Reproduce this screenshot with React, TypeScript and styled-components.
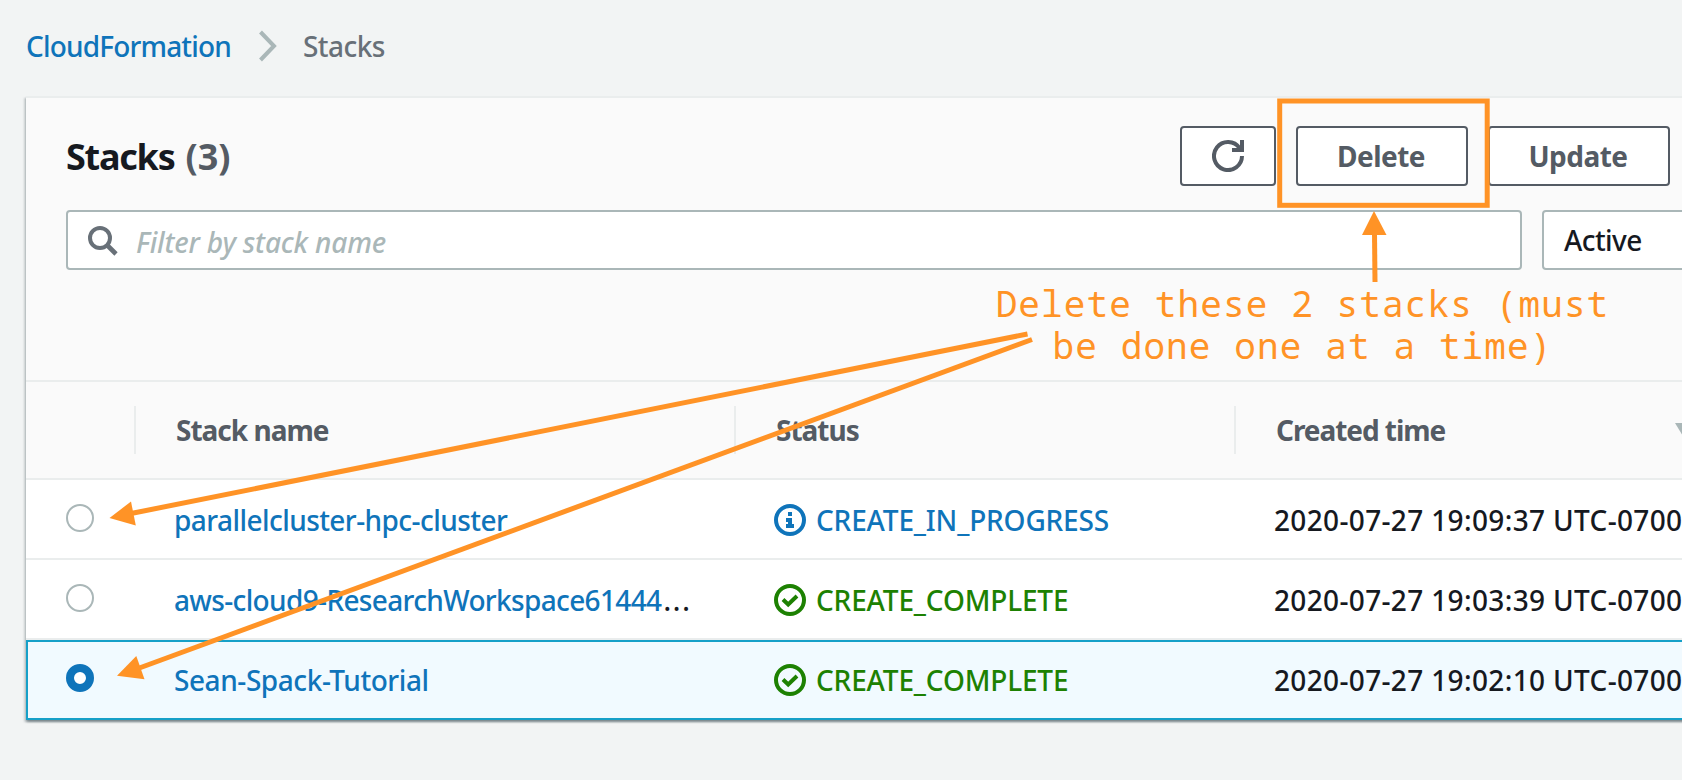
import React from "react";
import styled, { createGlobalStyle, css } from "styled-components";

const color = {
  page: "#f2f4f4",
  panel: "#fafafa",
  rule: "#eaeded",
  field: "#aab7b8",
  ink: "#16191f",
  slate: "#545b64",
  grey: "#687078",
  link: "#0f74ba",
  ok: "#1d8102",
  selected: "#f1faff",
  selectedBorder: "#16a0c8",
  note: "#ff9326",
};

const GlobalStyle = createGlobalStyle`
  * { box-sizing: border-box; }
  body {
    margin: 0;
    background: ${color.page};
    color: ${color.ink};
    font-family: "Noto Sans", "Open Sans", sans-serif;
    font-size: 28px;
    font-weight: 500;
    line-height: 40px;
    overflow: hidden;
  }
`;

const Page = styled.main`
  position: relative;
  width: 1682px;
  height: 780px;
  padding-left: 26px;
  overflow: hidden;
`;

/* Fine tracking for each label */
const Label = styled.span<{ $track?: number }>`
  letter-spacing: ${(p) => p.$track ?? 0}px;
  white-space: nowrap;
`;

const Breadcrumbs = styled.nav`
  display: flex;
  align-items: center;
  height: 96px;
  padding-bottom: 5px;
  color: ${color.grey};
`;

const Crumb = styled(Label)<{ $link?: boolean }>`
  width: ${(p) => (p.$link ? "205px" : "auto")};
  color: ${(p) => (p.$link ? color.link : color.grey)};
`;

const Chevron = styled.svg`
  width: 18px;
  height: 32px;
  margin: 1px 26px 0 28px;
`;

const Panel = styled.section`
  width: 1900px;
  border-top: 2px solid ${color.rule};
  background: ${color.panel};
  box-shadow:
    0 2px 2px rgba(0, 28, 36, 0.3),
    2px 2px 2px rgba(0, 28, 36, 0.15),
    -2px 2px 2px rgba(0, 28, 36, 0.15);
`;

const PanelHeader = styled.header`
  height: 282px;
  padding: 28px 0 0 40px;
`;

const TitleRow = styled.div`
  display: flex;
  align-items: center;
  height: 60px;
`;

const Title = styled.h1`
  width: 1114px;
  margin: 2px 0 0;
  font-size: 36px;
  font-weight: 700;
  white-space: nowrap;
`;

const Count = styled.span`
  margin-left: 11px;
  color: ${color.slate};
`;

const Actions = styled.div`
  display: flex;
  gap: 20px;
`;

const Button = styled.button<{ $width: number }>`
  display: flex;
  align-items: center;
  justify-content: center;
  width: ${(p) => p.$width}px;
  height: 60px;
  padding: 0 2px 1px 0;
  border: 2px solid ${color.slate};
  border-radius: 4px;
  background: #fff;
  color: ${color.slate};
  font: inherit;
  font-weight: 700;
`;

const RefreshGlyph = styled.svg`
  width: 32px;
  height: 32px;
  margin: 1px 0 0 2px;
`;

const Filters = styled.div`
  display: flex;
  gap: 20px;
  margin-top: 24px;
`;

const field = css`
  display: flex;
  align-items: center;
  height: 60px;
  border: 2px solid ${color.field};
  border-radius: 4px;
  background: #fff;
`;

const Search = styled.div`
  ${field}
  width: 1456px;
  padding: 3px 0 0 20px;
  color: ${color.field};
  font-style: italic;
`;

const SearchGlyph = styled.svg`
  width: 30px;
  height: 30px;
  margin: -2px 18px 0 0;
`;

const Select = styled.div`
  ${field}
  width: 300px;
  padding: 0 0 1px 20px;
`;

const columns = css`
  display: grid;
  grid-template-columns: 110px 600px 500px 1fr;
`;

const HeadRow = styled.div`
  ${columns}
  height: 100px;
  border-top: 2px solid ${color.rule};
  border-bottom: 2px solid ${color.rule};
  align-items: center;
`;

const HeadCell = styled.div<{ $last?: boolean }>`
  display: flex;
  align-items: center;
  height: 48px;
  padding: 0 0 1px 40px;
  border-right: ${(p) => (p.$last ? "0" : `2px solid ${color.rule}`)};
  color: ${color.slate};
  font-weight: 700;
`;

const SortGlyph = styled.svg`
  width: 16px;
  height: 13px;
  margin: 0 0 0 230px;
`;

const Row = styled.div<{ $selected?: boolean }>`
  ${columns}
  height: 80px;
  align-items: center;
  background: #fff;
  border-bottom: 2px solid ${color.rule};
  ${(p) =>
    p.$selected &&
    css`
      background: ${color.selected};
      border-bottom: 0;
      box-shadow: inset 0 0 0 2px ${color.selectedBorder};
      padding-bottom: 2px;
    `}
`;

const Cell = styled.div<{ $tone?: string }>`
  display: flex;
  align-items: center;
  padding: 2px 0 0 38px;
  color: ${(p) => p.$tone ?? color.ink};
`;

const RadioCell = styled.div`
  padding: 0 0 2px 40px;
  line-height: 0;
`;

const Radio = styled.span<{ $on?: boolean }>`
  display: inline-block;
  width: 28px;
  height: 28px;
  border: ${(p) => (p.$on ? `8px solid ${color.link}` : `2px solid ${color.field}`)};
  border-radius: 50%;
  background: #fff;
`;

const Ellipsis = styled.span`
  margin-left: 2px;
  color: ${color.ink};
  letter-spacing: 1.8px;
`;

const StatusGlyph = styled.svg`
  width: 32px;
  height: 32px;
  margin: 0 10px 0 0;
`;

const Overlay = styled.svg`
  position: absolute;
  inset: 0;
  pointer-events: none;
`;

const Note = styled.p`
  position: absolute;
  left: 994px;
  top: 283px;
  width: 617px;
  margin: 0;
  color: ${color.note};
  font: 400 36px/42px "Noto Sans Mono", "DejaVu Sans Mono", monospace;
  letter-spacing: 1.13px;
  text-align: center;
  white-space: nowrap;
`;

type Stack = { name: string; track: number; cut?: boolean; done: boolean; created: string; selected?: boolean };

const stacks: Stack[] = [
  { name: "parallelcluster-hpc-cluster", track: -0.56, done: false, created: "2020-07-27 19:09:37 UTC-0700" },
  { name: "aws-cloud9-ResearchWorkspace61444", track: -0.65, cut: true, done: true, created: "2020-07-27 19:03:39 UTC-0700" },
  { name: "Sean-Spack-Tutorial", track: -0.43, done: true, created: "2020-07-27 19:02:10 UTC-0700", selected: true },
];

function StatusIcon({ done }: { done: boolean }) {
  return (
    <StatusGlyph viewBox="0 0 32 32" fill="none" stroke="currentColor" strokeWidth="4">
      <circle cx="16" cy="16" r="14" />
      {done ? (
        <path d="M9 15.5l5.2 5L23 12" />
      ) : (
        <path d="M14 8h4v4h-4zM12 14h6v6h2v4h-8v-4h2v-2h-2z" fill="currentColor" stroke="none" />
      )}
    </StatusGlyph>
  );
}

export default function App() {
  return (
    <Page>
      <GlobalStyle />
      <Breadcrumbs>
        <Crumb $link $track={-0.83}>
          CloudFormation
        </Crumb>
        <Chevron viewBox="0 0 18 32" fill="none" stroke={color.field} strokeWidth="4">
          <path d="M1.5 2L15 16L1.5 30" />
        </Chevron>
        <Crumb $track={-0.55}>Stacks</Crumb>
      </Breadcrumbs>

      <Panel>
        <PanelHeader>
          <TitleRow>
            <Title>
              <Label $track={-1.25}>Stacks</Label>
              <Count>(3)</Count>
            </Title>
            <Actions>
              <Button $width={96} aria-label="Refresh">
                <RefreshGlyph viewBox="0 0 32 32" fill="none" stroke="currentColor" strokeWidth="4">
                  <path d="M30 16A14 14 0 1 1 27.6 8.2" />
                  <path d="M30 0V10H20" />
                  <path d="M24 6L29 6V10Z" fill="currentColor" stroke="none" />
                </RefreshGlyph>
              </Button>
              <Button $width={172}>
                <Label $track={-0.5}>Delete</Label>
              </Button>
              <Button $width={182}>
                <Label $track={-0.5}>Update</Label>
              </Button>
            </Actions>
          </TitleRow>
          <Filters>
            <Search>
              <SearchGlyph viewBox="0 0 30 30" fill="none" stroke={color.grey} strokeWidth="4">
                <circle cx="12" cy="12" r="10" />
                <path d="M19 19l9 9" strokeWidth="4.6" />
              </SearchGlyph>
              <Label $track={-0.17}>Filter by stack name</Label>
            </Search>
            <Select>
              <Label $track={-0.6}>Active</Label>
            </Select>
          </Filters>
        </PanelHeader>

        <HeadRow>
          <HeadCell />
          <HeadCell>
            <Label $track={-1}>Stack name</Label>
          </HeadCell>
          <HeadCell>
            <Label $track={-1}>Status</Label>
          </HeadCell>
          <HeadCell $last>
            <Label $track={-1.05}>Created time</Label>
            <SortGlyph viewBox="0 0 16 13">
              <path d="M0 0H16L8 13Z" fill={color.field} />
            </SortGlyph>
          </HeadCell>
        </HeadRow>
        {stacks.map((s) => (
          <Row key={s.name} $selected={s.selected}>
            <RadioCell>
              <Radio $on={s.selected} />
            </RadioCell>
            <Cell $tone={color.link}>
              <Label $track={s.track}>{s.name}</Label>
              {s.cut && <Ellipsis>...</Ellipsis>}
            </Cell>
            <Cell $tone={s.done ? color.ok : color.link}>
              <StatusIcon done={s.done} />
              <Label $track={-0.16}>{s.done ? "CREATE_COMPLETE" : "CREATE_IN_PROGRESS"}</Label>
            </Cell>
            <Cell>
              <Label $track={0.35}>{s.created}</Label>
            </Cell>
          </Row>
        ))}
      </Panel>

      <Overlay width="1682" height="780" viewBox="0 0 1682 780" fill="none" stroke={color.note} strokeWidth="5">
        <rect x="1279.7" y="101" width="207.5" height="104.3" />
        <path d="M1375 282L1374.5 233" />
        <path d="M1027.5 334L131 513.5" />
        <path d="M1032 339.5L138 668.5" />
        <g fill={color.note} stroke="none">
          <path d="M1374 211L1386.5 235H1362Z" />
          <path d="M109.5 518L131 501.5L135.8 525.5Z" />
          <path d="M117 675.7L136.3 656L144.5 679.2Z" />
        </g>
      </Overlay>
      <Note>
        Delete these 2 stacks (must
        <br />
        be done one at a time)
      </Note>
    </Page>
  );
}
